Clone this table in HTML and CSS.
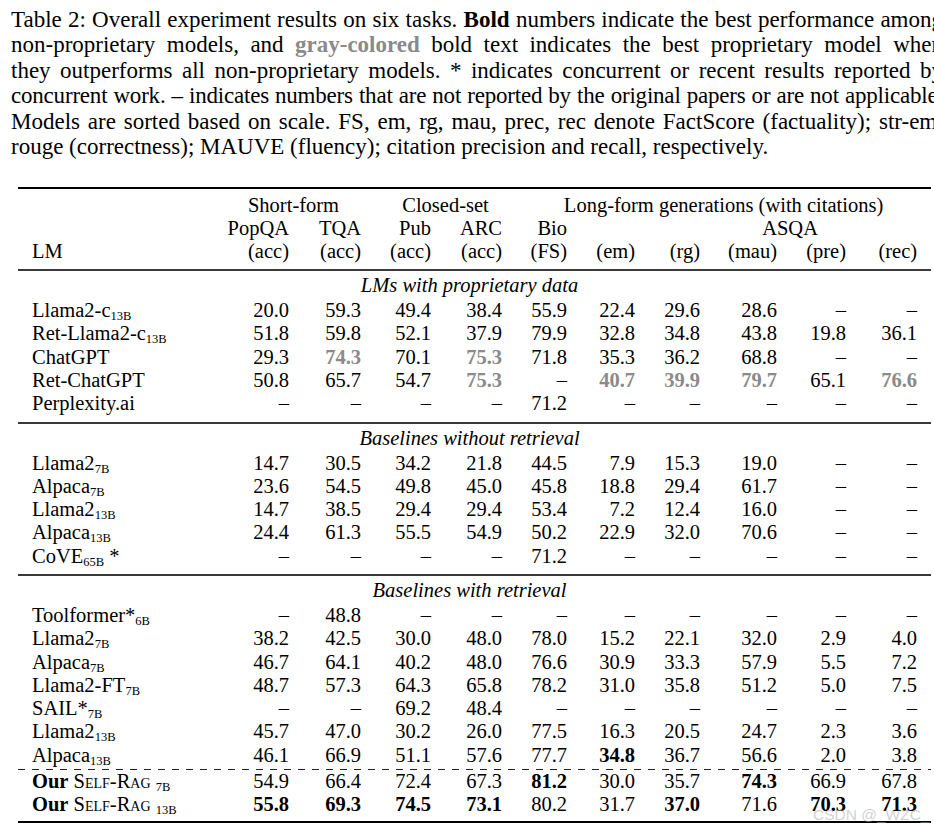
FILE: index.html
```html
<!DOCTYPE html>
<html>
<head>
<meta charset="utf-8">
<link rel="stylesheet" href="styles.css">
</head>
<body>
<div class="page">
  <div class="caption">
    <div class="cl">Table 2: Overall experiment results on six tasks. <b>Bold</b> numbers indicate the best performance among</div>
    <div class="cl">non-proprietary models, and <b class="gray">gray-colored</b> bold text indicates the best proprietary model when</div>
    <div class="cl">they outperforms all non-proprietary models. * indicates concurrent or recent results reported by</div>
    <div class="cl tight">concurrent work. – indicates numbers that are not reported by the original papers or are not applicable.</div>
    <div class="cl">Models are sorted based on scale. FS, em, rg, mau, prec, rec denote FactScore (factuality); str-em,</div>
    <div class="cl last">rouge (correctness); MAUVE (fluency); citation precision and recall, respectively.</div>
  </div>

  <table class="results">
    <colgroup>
      <col class="c-lm"><col class="c1"><col class="c2"><col class="c3"><col class="c4"><col class="c5"><col class="c6"><col class="c7"><col class="c8"><col class="c9"><col class="c10">
    </colgroup>
    <thead>
      <tr class="h1">
        <th></th>
        <th colspan="2" class="span">Short-form</th>
        <th colspan="2" class="span">Closed-set</th>
        <th colspan="6" class="span">Long-form generations (with citations)</th>
      </tr>
      <tr class="h2">
        <th></th>
        <th>PopQA</th><th>TQA</th><th>Pub</th><th>ARC</th><th>Bio</th>
        <th></th><th colspan="5" class="span">ASQA</th>
      </tr>
      <tr class="h3">
        <th class="lm">LM</th>
        <th>(acc)</th><th>(acc)</th><th>(acc)</th><th>(acc)</th><th>(FS)</th>
        <th>(em)</th><th>(rg)</th><th>(mau)</th><th>(pre)</th><th>(rec)</th>
      </tr>
    </thead>
    <tbody>
      <tr class="sec first"><td colspan="11">LMs with proprietary data</td></tr>
      <tr><td class="lm">Llama2-c<span class="sub">13B</span></td><td>20.0</td><td>59.3</td><td>49.4</td><td>38.4</td><td>55.9</td><td>22.4</td><td>29.6</td><td>28.6</td><td>–</td><td>–</td></tr>
      <tr><td class="lm">Ret-Llama2-c<span class="sub">13B</span></td><td>51.8</td><td>59.8</td><td>52.1</td><td>37.9</td><td>79.9</td><td>32.8</td><td>34.8</td><td>43.8</td><td>19.8</td><td>36.1</td></tr>
      <tr><td class="lm">ChatGPT</td><td>29.3</td><td class="g">74.3</td><td>70.1</td><td class="g">75.3</td><td>71.8</td><td>35.3</td><td>36.2</td><td>68.8</td><td>–</td><td>–</td></tr>
      <tr><td class="lm">Ret-ChatGPT</td><td>50.8</td><td>65.7</td><td>54.7</td><td class="g">75.3</td><td>–</td><td class="g">40.7</td><td class="g">39.9</td><td class="g">79.7</td><td>65.1</td><td class="g">76.6</td></tr>
      <tr class="end"><td class="lm">Perplexity.ai</td><td>–</td><td>–</td><td>–</td><td>–</td><td>71.2</td><td>–</td><td>–</td><td>–</td><td>–</td><td>–</td></tr>

      <tr class="sec"><td colspan="11">Baselines without retrieval</td></tr>
      <tr><td class="lm">Llama2<span class="sub">7B</span></td><td>14.7</td><td>30.5</td><td>34.2</td><td>21.8</td><td>44.5</td><td>7.9</td><td>15.3</td><td>19.0</td><td>–</td><td>–</td></tr>
      <tr><td class="lm">Alpaca<span class="sub">7B</span></td><td>23.6</td><td>54.5</td><td>49.8</td><td>45.0</td><td>45.8</td><td>18.8</td><td>29.4</td><td>61.7</td><td>–</td><td>–</td></tr>
      <tr><td class="lm">Llama2<span class="sub">13B</span></td><td>14.7</td><td>38.5</td><td>29.4</td><td>29.4</td><td>53.4</td><td>7.2</td><td>12.4</td><td>16.0</td><td>–</td><td>–</td></tr>
      <tr><td class="lm">Alpaca<span class="sub">13B</span></td><td>24.4</td><td>61.3</td><td>55.5</td><td>54.9</td><td>50.2</td><td>22.9</td><td>32.0</td><td>70.6</td><td>–</td><td>–</td></tr>
      <tr class="end"><td class="lm">CoVE<span class="sub">65B</span> *</td><td>–</td><td>–</td><td>–</td><td>–</td><td>71.2</td><td>–</td><td>–</td><td>–</td><td>–</td><td>–</td></tr>

      <tr class="sec"><td colspan="11">Baselines with retrieval</td></tr>
      <tr><td class="lm">Toolformer*<span class="sub">6B</span></td><td>–</td><td>48.8</td><td>–</td><td>–</td><td>–</td><td>–</td><td>–</td><td>–</td><td>–</td><td>–</td></tr>
      <tr><td class="lm">Llama2<span class="sub">7B</span></td><td>38.2</td><td>42.5</td><td>30.0</td><td>48.0</td><td>78.0</td><td>15.2</td><td>22.1</td><td>32.0</td><td>2.9</td><td>4.0</td></tr>
      <tr><td class="lm">Alpaca<span class="sub">7B</span></td><td>46.7</td><td>64.1</td><td>40.2</td><td>48.0</td><td>76.6</td><td>30.9</td><td>33.3</td><td>57.9</td><td>5.5</td><td>7.2</td></tr>
      <tr><td class="lm">Llama2-FT<span class="sub">7B</span></td><td>48.7</td><td>57.3</td><td>64.3</td><td>65.8</td><td>78.2</td><td>31.0</td><td>35.8</td><td>51.2</td><td>5.0</td><td>7.5</td></tr>
      <tr><td class="lm">SAIL*<span class="sub">7B</span></td><td>–</td><td>–</td><td>69.2</td><td>48.4</td><td>–</td><td>–</td><td>–</td><td>–</td><td>–</td><td>–</td></tr>
      <tr><td class="lm">Llama2<span class="sub">13B</span></td><td>45.7</td><td>47.0</td><td>30.2</td><td>26.0</td><td>77.5</td><td>16.3</td><td>20.5</td><td>24.7</td><td>2.3</td><td>3.6</td></tr>
      <tr><td class="lm">Alpaca<span class="sub">13B</span></td><td>46.1</td><td>66.9</td><td>51.1</td><td>57.6</td><td>77.7</td><td><b>34.8</b></td><td>36.7</td><td>56.6</td><td>2.0</td><td>3.8</td></tr>
      <tr class="dash"><td colspan="11"></td></tr>
      <tr><td class="lm"><b>Our</b> <span class="sc">Self-Rag</span> <span class="sub">7B</span></td><td>54.9</td><td>66.4</td><td>72.4</td><td>67.3</td><td><b>81.2</b></td><td>30.0</td><td>35.7</td><td><b>74.3</b></td><td>66.9</td><td>67.8</td></tr>
      <tr class="final"><td class="lm"><b>Our</b> <span class="sc">Self-Rag</span> <span class="sub">13B</span></td><td><b>55.8</b></td><td><b>69.3</b></td><td><b>74.5</b></td><td><b>73.1</b></td><td>80.2</td><td>31.7</td><td><b>37.0</b></td><td>71.6</td><td><b>70.3</b></td><td><b>71.3</b></td></tr>
    </tbody>
  </table>
  <div class="watermark">CSDN @_WZC_</div>
</div>
</body>
</html>
```

FILE: styles.css
```css
html, body {
  margin: 0;
  padding: 0;
  overflow: hidden;
  background: #fff;
}

.page {
  position: relative;
  width: 934px;
  height: 830px;
  overflow: hidden;
  font-family: "Liberation Serif", "Times New Roman", serif;
  color: #000;
}

.caption {
  margin: 7px 0 0 11px;
  width: 932px;
  font-size: 23px;
  line-height: 25.4px;
}

.cl {
  white-space: nowrap;
  text-align: justify;
  text-align-last: justify;
}

.cl.tight {
  letter-spacing: -0.2px;
}

.cl.last {
  text-align: left;
  text-align-last: left;
}

.gray {
  color: #8a8a8a;
}

.results {
  margin: 27.6px 0 0 18px;
  width: 913px;
  table-layout: fixed;
  border-collapse: collapse;
  font-size: 20.5px;
  line-height: 23px;
}

.c-lm { width: 194px; }
.c1 { width: 91px; }
.c2 { width: 72px; }
.c3 { width: 70px; }
.c4 { width: 71px; }
.c5 { width: 65px; }
.c6 { width: 68px; }
.c7 { width: 65px; }
.c8 { width: 77px; }
.c9 { width: 69px; }
.c10 { width: 71px; }

.results th,
.results td {
  padding: 0 14px;
  text-align: right;
  font-weight: normal;
  white-space: nowrap;
  vertical-align: baseline;
}

.results th.span {
  text-align: center;
}

.results .lm {
  text-align: left;
}

.results thead tr.h1 {
  border-top: 2px solid #000;
}

.results thead tr.h1 th {
  padding-top: 5px;
}

.results thead tr.h3 th {
  padding-bottom: 6px;
}

.results tbody td {
  line-height: 23.3px;
}

.results tr.sec {
  border-top: 2px solid #3a3a3a;
}

.results tr.sec td {
  text-align: center;
  font-style: italic;
  padding: 3px 10px 2px 0;
  line-height: 23px;
}

.results tr.end td {
  padding-bottom: 6px;
}

.results tr.final td {
  padding-bottom: 4px;
}

.results tr.final {
  border-bottom: 2px solid #000;
}

.results tr.dash td {
  padding: 0;
  height: 3px;
  line-height: 0;
  font-size: 0;
  background-image: repeating-linear-gradient(to right, #222 0, #222 7px, transparent 7px, transparent 14px);
  background-size: 100% 1px;
  background-position: 0 2px;
  background-repeat: no-repeat;
}

.results td.g {
  color: #8a8a8a;
  font-weight: bold;
}

.sub {
  font-size: 12.5px;
  line-height: 0;
  vertical-align: -3px;
}

.sc {
  font-variant: small-caps;
}

.watermark {
  position: absolute;
  left: 813px;
  top: 806px;
  font-family: "Liberation Sans", Arial, sans-serif;
  font-size: 15.5px;
  line-height: 18px;
  color: rgba(170, 170, 170, 0.55);
  white-space: nowrap;
}
```
